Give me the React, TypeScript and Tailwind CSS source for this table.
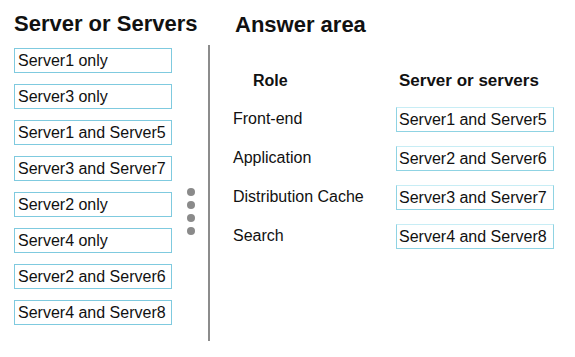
import React from "react";

const leftItems = [
  "Server1 only",
  "Server3 only",
  "Server1 and Server5",
  "Server3 and Server7",
  "Server2 only",
  "Server4 only",
  "Server2 and Server6",
  "Server4 and Server8",
];

const rows = [
  ["Front-end", "Server1 and Server5"],
  ["Application", "Server2 and Server6"],
  ["Distribution Cache", "Server3 and Server7"],
  ["Search", "Server4 and Server8"],
];

function Box({ text, right }: { text: string; right?: boolean }) {
  return (
    <div
      className={
        right
          ? "flex h-[25px] w-[158px] items-center border border-[#8fd3e3] border-t-[#c8edf5] pl-[2px] text-[16px] leading-[16px] text-[#111]"
          : "flex h-[25px] w-[158px] items-center border border-[#7fcadf] pl-[3px] text-[16px] leading-[16px] text-[#111]"
      }
    >
      {text}
    </div>
  );
}

export default function App() {
  return (
    <div
      className="flex h-[357px] w-[575px] overflow-hidden bg-white text-[#111]"
      style={{ fontFamily: '"Liberation Sans", Arial, sans-serif' }}
    >
      <div className="flex w-[180px] shrink-0 flex-col pl-[14px] pt-[11px]">
        <div className="text-[22px] font-bold leading-[25px] whitespace-nowrap">Server or Servers</div>
        <div className="mt-[12px] flex flex-col gap-[11px]">
          {leftItems.map((t) => (
            <Box key={t} text={t} />
          ))}
        </div>
      </div>
      <div className="flex flex-1 flex-col">
        <div className="pl-[55px] pt-[12px] text-[22px] font-bold leading-[25px]">Answer area</div>
        <div className="mt-[8px] flex">
          <div className="ml-[7px] mt-[143px] flex w-[8px] flex-col gap-[5px] self-start">
            <div className="h-[8px] w-[8px] rounded-full bg-[#8a8a8a]" />
            <div className="h-[8px] w-[8px] rounded-full bg-[#8a8a8a]" />
            <div className="h-[8px] w-[8px] rounded-full bg-[#8a8a8a]" />
            <div className="h-[8px] w-[8px] rounded-full bg-[#8a8a8a]" />
          </div>
          <div className="ml-[13px] h-[296px] w-[2px] bg-[#8c8c8c]" />
          <div className="flex flex-col pl-[23px] pt-[27px]">
            <div className="flex h-[18px] items-center font-bold leading-[18px]">
              <div className="w-[163px] pl-[20px] text-[16px]">Role</div>
              <div className="pl-[3px] text-[17px] whitespace-nowrap">Server or servers</div>
            </div>
            <div className="mt-[17px] flex flex-col gap-[14px]">
              {rows.map(([role, val]) => (
                <div key={role} className="flex h-[25px] items-center">
                  <div className="-mt-[2px] w-[163px] text-[16px] leading-[18px]">{role}</div>
                  <Box text={val} right />
                </div>
              ))}
            </div>
          </div>
        </div>
      </div>
    </div>
  );
}
